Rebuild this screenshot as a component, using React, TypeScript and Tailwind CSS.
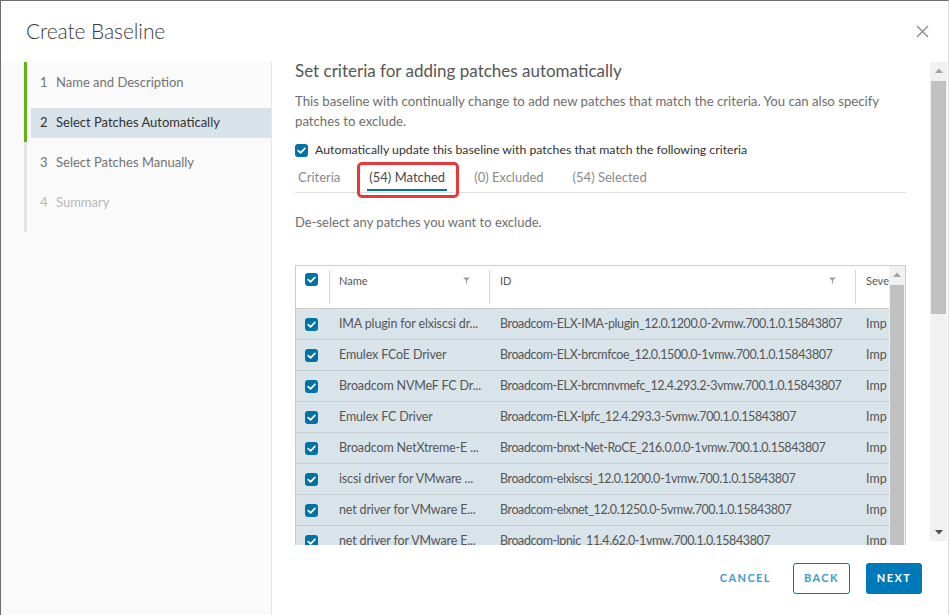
import React from "react";

const Check = () => (
  <span className="inline-flex h-[13px] w-[13px] shrink-0 items-center justify-center rounded-[3px] bg-[#0072a3]">
    <svg width="9" height="7" viewBox="0 0 9 7">
      <path d="M1.2 3.6 L3.6 5.8 L7.9 1.3" fill="none" stroke="#ffffff" strokeWidth="1.7" strokeLinecap="round" strokeLinejoin="round" />
    </svg>
  </span>
);

const Filter = () => (
  <svg width="7" height="7" viewBox="0 0 7 7">
    <path d="M0 0.5 H7 L4.1 3.4 V6.5 H2.9 V3.4 Z" fill="#a0a0a0" />
  </svg>
);

const Up = () => (
  <svg width="8" height="5" viewBox="0 0 8 5">
    <path d="M0 5 L4 0.5 L8 5 Z" fill="#a3a3a3" />
  </svg>
);
const Down = () => (
  <svg width="8" height="5" viewBox="0 0 8 5">
    <path d="M0 0 L8 0 L4 4.5 Z" fill="#505050" />
  </svg>
);

const rows: [string, string][] = [
  ["IMA plugin for elxiscsi dr...", "Broadcom-ELX-IMA-plugin_12.0.1200.0-2vmw.700.1.0.15843807"],
  ["Emulex FCoE Driver", "Broadcom-ELX-brcmfcoe_12.0.1500.0-1vmw.700.1.0.15843807"],
  ["Broadcom NVMeF FC Dr...", "Broadcom-ELX-brcmnvmefc_12.4.293.2-3vmw.700.1.0.15843807"],
  ["Emulex FC Driver", "Broadcom-ELX-lpfc_12.4.293.3-5vmw.700.1.0.15843807"],
  ["Broadcom NetXtreme-E ...", "Broadcom-bnxt-Net-RoCE_216.0.0.0-1vmw.700.1.0.15843807"],
  ["iscsi driver for VMware ...", "Broadcom-elxiscsi_12.0.1200.0-1vmw.700.1.0.15843807"],
  ["net driver for VMware E...", "Broadcom-elxnet_12.0.1250.0-5vmw.700.1.0.15843807"],
  ["net driver for VMware E...", "Broadcom-lpnic_11.4.62.0-1vmw.700.1.0.15843807"],
];

const steps = [
  { n: "1", label: "Name and Description", cls: "text-[#737373]", done: true, active: false },
  { n: "2", label: "Select Patches Automatically", cls: "text-[#333333]", done: true, active: true },
  { n: "3", label: "Select Patches Manually", cls: "text-[#737373]", done: false, active: false },
  { n: "4", label: "Summary", cls: "text-[#b8b8b8]", done: false, active: false },
];

export default function App() {
  return (
    <div className="flex h-[615px] w-[949px] flex-col overflow-hidden border-l border-t border-r border-[#6e6e6e] border-r-[#dcdcdc] bg-white font-['Lato','Liberation_Sans',sans-serif] text-[13px] text-[#565656]">
      {/* Header */}
      <div className="flex h-[60px] shrink-0 items-center justify-between pl-[25px] pr-[19px]">
        <div className="text-[21px] font-light tracking-[-0.1px] text-[#3a3a3a]">Create Baseline</div>
        <svg width="13" height="13" viewBox="0 0 13 13">
          <path d="M1 1 L12 12 M12 1 L1 12" stroke="#8a8a8a" strokeWidth="1.3" />
        </svg>
      </div>

      {/* Body */}
      <div className="flex h-[554px] shrink-0">
        {/* Sidebar */}
        <div className="w-[271px] shrink-0 border-r border-[#e6e6e6] bg-[#fafafa]">
          <div className="ml-[23px] mt-[1px] border-l-[3px] border-[#e3e3e3] pb-[10px]">
            {steps.map((s) => (
              <div
                key={s.n}
                className={
                  s.done
                    ? "-ml-[3px] flex h-[40px] items-center border-l-[3px] border-[#60b515] pt-[1px]"
                    : "flex h-[40px] items-center pt-[2px]"
                }
              >
                <div
                  className={
                    s.active
                      ? "ml-[4px] flex h-[30px] flex-1 items-center bg-[#d8e3e9] pl-[9px]"
                      : "ml-[4px] flex h-[30px] flex-1 items-center pl-[9px]"
                  }
                >
                  <span className={`w-[16px] ${s.cls}`}>{s.n}</span>
                  <span className={s.cls}>{s.label}</span>
                </div>
              </div>
            ))}
          </div>
        </div>

        {/* Right column */}
        <div className="flex min-w-0 flex-1 flex-col">
          <div className="flex h-[484px] shrink-0">
            <div className="min-w-0 flex-1 overflow-hidden pl-[23px] pr-[24px]">
              <div className="text-[17px] leading-[20px] text-[#565656]">Set criteria for adding patches automatically</div>
              <div className="mt-[10px] whitespace-nowrap text-[13.2px] leading-[20px] text-[#6e6e6e]">
                This baseline with continually change to add new patches that match the criteria. You can also specify
                <br />
                patches to exclude.
              </div>
              <div className="mt-[9px] flex h-[20px] items-center gap-[7px] text-[12.3px] text-[#333333]">
                <Check />
                <span>Automatically update this baseline with patches that match the following criteria</span>
              </div>

              {/* Tabs */}
              <div className="mt-[3px] flex h-[30px] gap-[25px] border-b border-[#dddddd] pl-[1px]">
                <div className="relative flex h-[29px] items-center px-[2px] text-[#8a8a8a]">Criteria</div>
                <div className="relative flex h-[29px] items-center px-[2px] text-[#4a4a4a]">
                  (54) Matched
                  <div className="absolute bottom-[1px] left-0 right-0 h-[2px] bg-[#0072a3]" />
                  <div className="absolute -bottom-[6px] -left-[10px] -right-[12px] -top-[1px] rounded-[5px] border-[3px] border-[#e5393c]" />
                </div>
                <div className="relative flex h-[29px] items-center px-[2px] text-[#8a8a8a]">(0) Excluded</div>
                <div className="relative flex h-[29px] items-center px-[2px] text-[#8a8a8a]">(54) Selected</div>
              </div>

              <div className="mt-[19px] leading-[20px] text-[#6e6e6e]">De-select any patches you want to exclude.</div>

              {/* Table */}
              <div className="mt-[33px] flex border border-[#cccccc]">
                <div className="min-w-0 flex-1 overflow-hidden">
                  {/* header */}
                  <div className="grid h-[43px] grid-cols-[33px_160px_366px_1fr] border-b border-[#cccccc] bg-white text-[11px] text-[#565656]">
                    <div className="flex pl-[9px] pt-[7px]">
                      <Check />
                    </div>
                    <div className="my-[4px] flex items-start justify-between border-l border-[#d6d6d6] pl-[9px] pr-[19px] pt-[3px]">
                      <span>Name</span>
                      <span className="pt-[4px]"><Filter /></span>
                    </div>
                    <div className="my-[4px] flex items-start justify-between border-l border-[#d6d6d6] pl-[10px] pr-[19px] pt-[3px]">
                      <span>ID</span>
                      <span className="pt-[4px]"><Filter /></span>
                    </div>
                    <div className="my-[4px] overflow-hidden whitespace-nowrap border-l border-[#d6d6d6] pl-[10px] pt-[3px]">
                      Seve
                    </div>
                  </div>
                  {rows.map(([name, id], i) => (
                    <div
                      key={i}
                      className="grid h-[31px] grid-cols-[33px_160px_366px_1fr] items-center border-b border-[#c8cfd4] bg-[#d9e4ea] text-[12.5px] text-[#565656]"
                    >
                      <div className="flex pl-[9px]">
                        <Check />
                      </div>
                      <div className="overflow-hidden whitespace-nowrap pl-[10px] tracking-[-0.15px]">{name}</div>
                      <div className="overflow-hidden whitespace-nowrap pl-[11px] tracking-[-0.4px]">{id}</div>
                      <div className="overflow-hidden whitespace-nowrap pl-[11px]">Imp</div>
                    </div>
                  ))}
                </div>
                {/* inner scrollbar */}
                <div className="flex w-[16px] shrink-0 flex-col bg-[#f1f1f1]">
                  <div className="flex h-[17px] items-center justify-center">
                    <Up />
                  </div>
                  <div className="mx-[1px] mt-[2px] h-[300px] bg-[#c1c1c1]" />
                </div>
              </div>
            </div>

            {/* outer scrollbar */}
            <div className="mb-[4px] mr-[1px] mt-[1px] flex w-[17px] shrink-0 flex-col bg-[#f1f1f1]">
              <div className="flex h-[17px] items-center justify-center">
                <Up />
              </div>
              <div className="mx-[1px] mt-[2px] h-[233px] bg-[#c1c1c1]" />
              <div className="flex-1" />
              <div className="flex h-[17px] items-center justify-center">
                <Down />
              </div>
            </div>
          </div>

          {/* Footer */}
          <div className="flex h-[70px] shrink-0 items-start justify-end pr-[26px] pt-[18px] text-[11px] font-bold">
            <div className="mr-[10px] flex h-[31px] items-center px-[12px] tracking-[0.13em] text-[#3d9bd1]">CANCEL</div>
            <div className="mr-[16px] flex h-[31px] w-[57px] items-center justify-center rounded-[3px] border border-[#0079b8] tracking-[0.13em] text-[#3d9bd1]">
              BACK
            </div>
            <div className="flex h-[31px] w-[56px] items-center justify-center rounded-[3px] bg-[#0079b8] tracking-[0.13em] text-white">
              NEXT
            </div>
          </div>
        </div>
      </div>
    </div>
  );
}
